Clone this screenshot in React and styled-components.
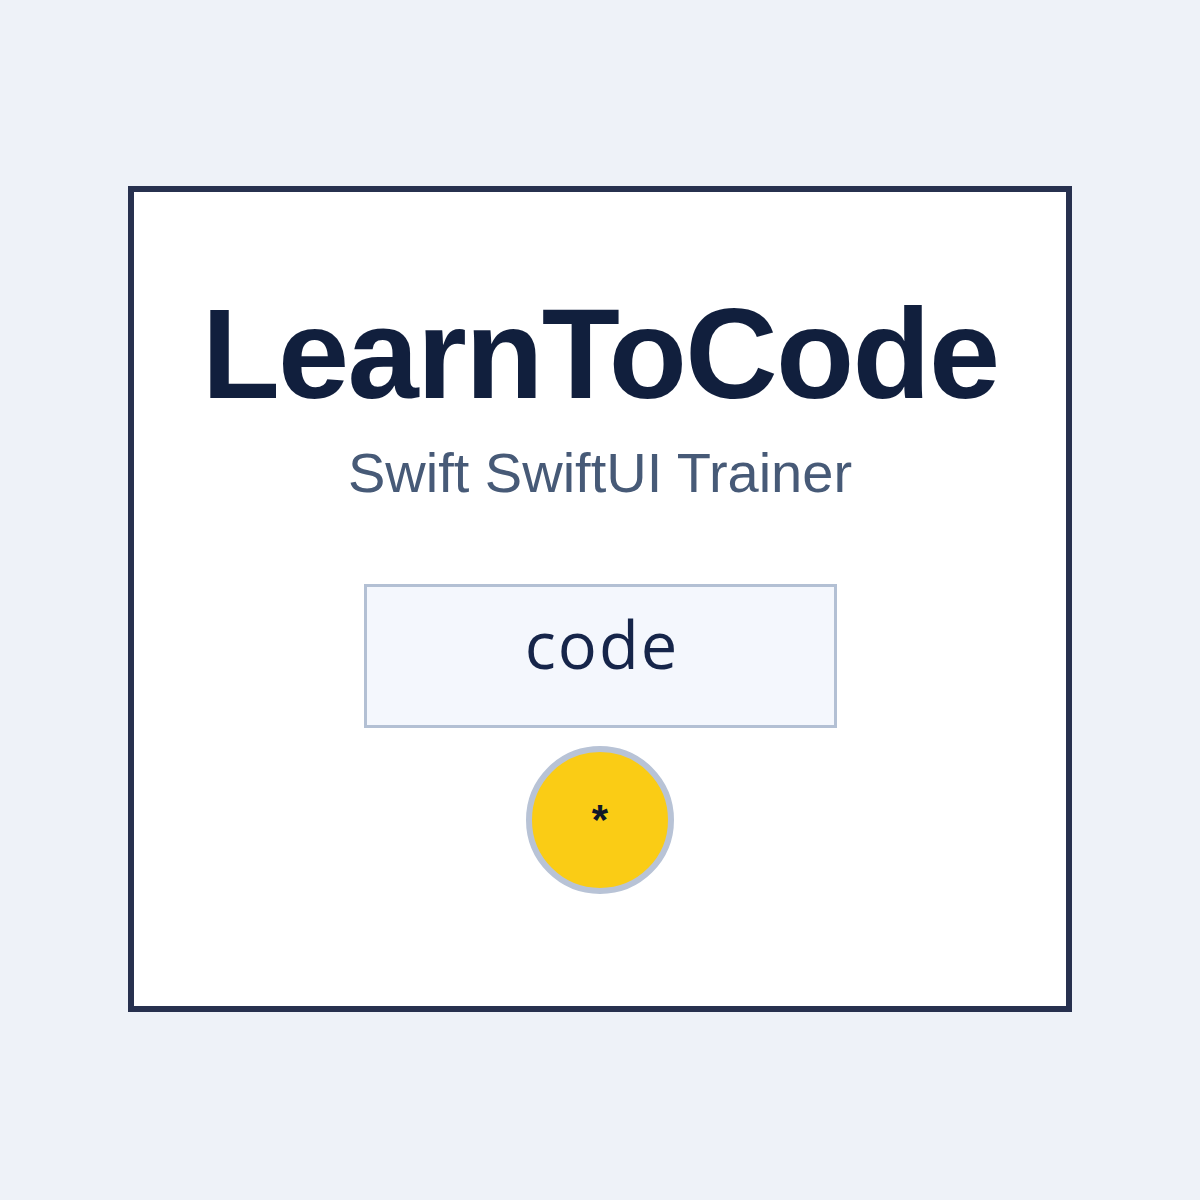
import React from "react";
import styled, { createGlobalStyle } from "styled-components";

const Global = createGlobalStyle`
  html, body { margin: 0; padding: 0; }
  body {
    background: #eef2f8;
    font-family: "Liberation Sans", Arial, sans-serif;
  }
`;

const Page = styled.div`
  min-height: 1200px;
  box-sizing: border-box;
  padding-top: 186px;
  display: flex;
  justify-content: center;
  align-items: flex-start;
`;

const Card = styled.div`
  box-sizing: border-box;
  width: 944px;
  height: 826px;
  background: #ffffff;
  border: 6px solid #27314f;
  padding-top: 98px;
  display: flex;
  flex-direction: column;
  align-items: center;
`;

const Title = styled.h1`
  margin: 0;
  font-family: "Liberation Sans", Arial, sans-serif;
  font-weight: 700;
  font-size: 128px;
  line-height: 128px;
  letter-spacing: -1.7px;
  color: #111f3d;
`;

const Subtitle = styled.div`
  margin-top: 27px;
  font-family: "Liberation Sans", Arial, sans-serif;
  font-size: 56px;
  line-height: 56px;
  color: #475a77;
`;

const CodeBox = styled.div`
  box-sizing: border-box;
  margin-top: 83px;
  width: 473px;
  height: 144px;
  border: 3px solid #b3c0d4;
  background: #f4f7fd;
  display: flex;
  align-items: center;
  justify-content: center;
  padding-bottom: 24px;
  padding-left: 4px;
  font-family: "Open Sans", "Noto Sans", sans-serif;
  font-size: 65px;
  letter-spacing: 2px;
  color: #16254a;
`;

const Dot = styled.div`
  box-sizing: border-box;
  margin-top: 18px;
  width: 148px;
  height: 148px;
  border-radius: 50%;
  border: 6px solid #b8c3d6;
  background: #facc15;
  display: flex;
  align-items: center;
  justify-content: center;
  font-family: "Liberation Sans", Arial, sans-serif;
  font-weight: 700;
  font-size: 42px;
  color: #111827;
`;

export default function App() {
  return (
    <>
      <Global />
      <Page>
        <Card>
          <Title>LearnToCode</Title>
          <Subtitle>Swift SwiftUI Trainer</Subtitle>
          <CodeBox>code</CodeBox>
          <Dot>*</Dot>
        </Card>
      </Page>
    </>
  );
}
